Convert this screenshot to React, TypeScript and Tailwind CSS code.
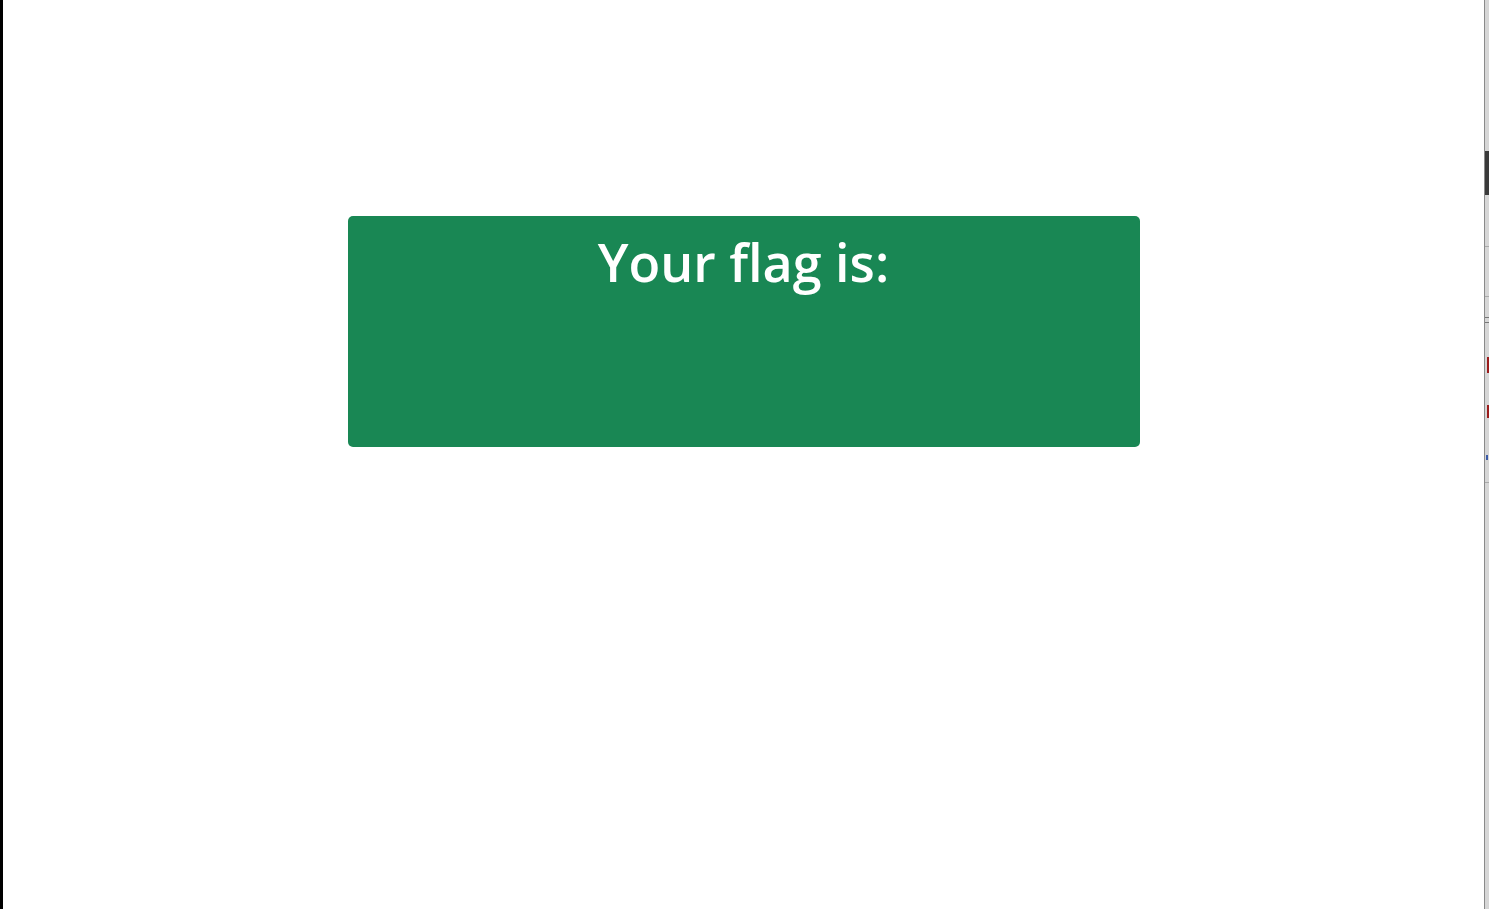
export default function App() {
  return (
    <div className="flex h-[909px] w-full overflow-hidden bg-white">
      <div className="w-[3px] shrink-0 bg-black" />
      <main className="flex flex-1 justify-center pt-[216px]">
        <div className="flex h-[231px] w-[792px] justify-center rounded-[5px] bg-[#198754]">
          <h1
            className="mt-[15px] text-[52px] leading-[1.2] font-semibold text-white"
            style={{ fontFamily: '"Open Sans", "Noto Sans", sans-serif' }}
          >
            Your flag is:
          </h1>
        </div>
      </main>
      <div className="flex w-[5px] shrink-0">
        <div className="w-px bg-[#8a8a8a]" />
        <div className="flex flex-1 flex-col bg-[#d6d6d6]">
          <div className="h-[151px]" />
          <div className="h-[44px] bg-[#3a3a3a]" />
          <div className="h-[51px]" />
          <div className="h-px bg-[#aaaaaa]" />
          <div className="h-[49px]" />
          <div className="h-px bg-[#aaaaaa]" />
          <div className="h-[20px]" />
          <div className="h-[6px] border-y border-[#777777]" />
          <div className="h-[34px]" />
          <div className="ml-[2px] h-[16px] bg-[#9b1c1c]" />
          <div className="h-[32px]" />
          <div className="ml-[2px] h-[13px] bg-[#9b1c1c]" />
          <div className="h-[37px]" />
          <div className="ml-[1px] h-[5px] w-[2px] bg-[#3b5ba8]" />
          <div className="h-[22px]" />
          <div className="h-px bg-[#aaaaaa]" />
        </div>
      </div>
    </div>
  )
}
